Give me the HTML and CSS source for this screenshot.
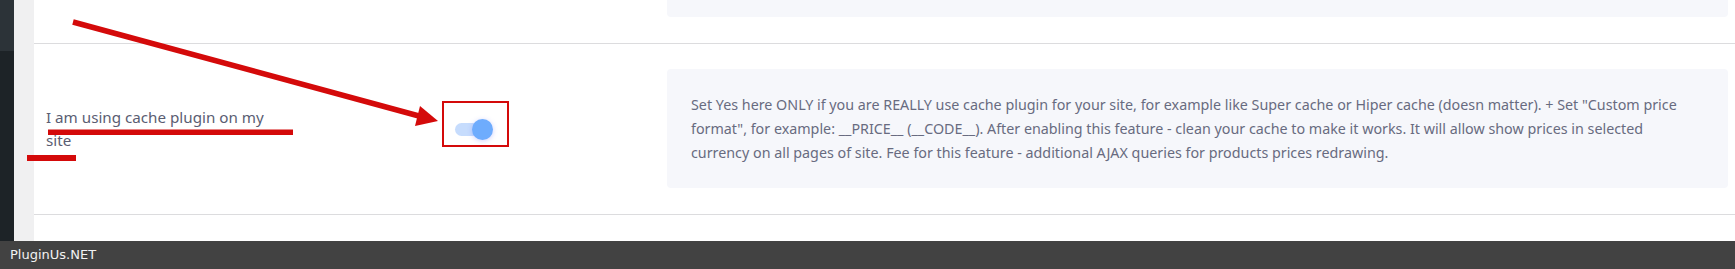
FILE: index.html
```html
<!DOCTYPE html>
<html lang="en">

<head>
    <meta charset="UTF-8">
    <title>Currency Options</title>
    <link rel="stylesheet" href="styles.css">
</head>

<body>

    <div class="page">
        <div class="sidebar"></div>
        <div class="gutter"></div>

        <div class="content">
            <!-- previous option, only its bottom is visible -->
            <div class="option option-prev">
                <div class="info info-cut"></div>
            </div>

            <div class="option">
                <div class="label">I am using cache plugin on my site</div>
                <div class="mark">
                    <label class="switch">
                        <input type="checkbox" checked>
                        <span class="track"></span>
                        <span class="knob"></span>
                    </label>
                </div>
                <div class="info">
                    Set Yes here ONLY if you are REALLY use cache plugin for your site, for example like Super cache or Hiper cache (doesn matter). + Set "Custom price format", for example: __PRICE__ (__CODE__). After enabling this feature - clean your cache to make it works. It will allow show prices in selected currency on all pages of site. Fee for this feature - additional AJAX queries for products prices redrawing.
                </div>
            </div>
        </div>

        <!-- red annotations drawn over the screenshot -->
        <svg class="notes" width="1735" height="241" viewBox="0 0 1735 241">
            <line x1="73" y1="22" x2="419" y2="116" stroke="#d40a0a" stroke-width="5.5" />
            <polygon points="438,121 420,106 415,126" fill="#d40a0a" />
            <rect x="48" y="129.5" width="245" height="5.5" fill="#d40a0a" />
            <rect x="27" y="155" width="49" height="6" fill="#d40a0a" />
        </svg>
    </div>

    <div class="footer">PluginUs.NET</div>

</body>

</html>
```

FILE: styles.css
```css
* {
    margin: 0;
    padding: 0;
    box-sizing: border-box;
}

body {
    width: 1735px;
    height: 269px;
    overflow: hidden;
    background-color: #fff;
    font-family: "Noto Sans", sans-serif;
}

.page {
    position: relative;
    display: flex;
    height: 241px;
}

.sidebar {
    width: 14px;
    background: linear-gradient(#2c3338 0, #2c3338 51px, #1d2327 51px);
}

.gutter {
    width: 20px;
    background-color: #f0f0f1;
}

.content {
    flex: 1;
    background-color: #fff;
}

.option {
    display: grid;
    grid-template-columns: 396px 225px 1fr;
    align-items: center;
    padding: 25px 7px 26px 12px;
    border-bottom: 1px solid #dcdcde;
}

.option-prev {
    display: block;
    height: 44px;
    padding: 0 7px 0 633px;
}

.label {
    width: 234px;
    font-size: 15.2px;
    line-height: 23px;
    color: #5a5d72;
}

.mark {
    align-self: start;
    margin-top: 32px;
    width: 67px;
    height: 46px;
    border: 2px solid #d40a0a;
}

.switch {
    position: relative;
    display: block;
    width: 40px;
    height: 20px;
    margin: 16px 0 0 11px;
}

.switch input {
    display: none;
}

.switch .track {
    position: absolute;
    left: 0;
    top: 4px;
    width: 34px;
    height: 13px;
    border-radius: 7px;
    background-color: #c6dcfd;
}

.switch .knob {
    position: absolute;
    left: 17px;
    top: 0;
    width: 21px;
    height: 21px;
    border-radius: 50%;
    background-color: #6eacfd;
    box-shadow: 0 1px 5px rgba(110, 120, 250, 0.35);
}

.info {
    background-color: #f6f7fb;
    border-radius: 4px;
    padding: 24px 23px 23px 24px;
    font-size: 14.3px;
    line-height: 24px;
    color: #686b80;
}

.info-cut {
    height: 17px;
    padding: 0;
    border-radius: 0 0 4px 4px;
}

.notes {
    position: absolute;
    left: 0;
    top: 0;
    pointer-events: none;
}

.footer {
    height: 28px;
    padding: 5px 10px;
    background-color: #424242;
    color: #f2f2f2;
    font-family: "DejaVu Sans", sans-serif;
    font-size: 13px;
    line-height: 18px;
}
```
